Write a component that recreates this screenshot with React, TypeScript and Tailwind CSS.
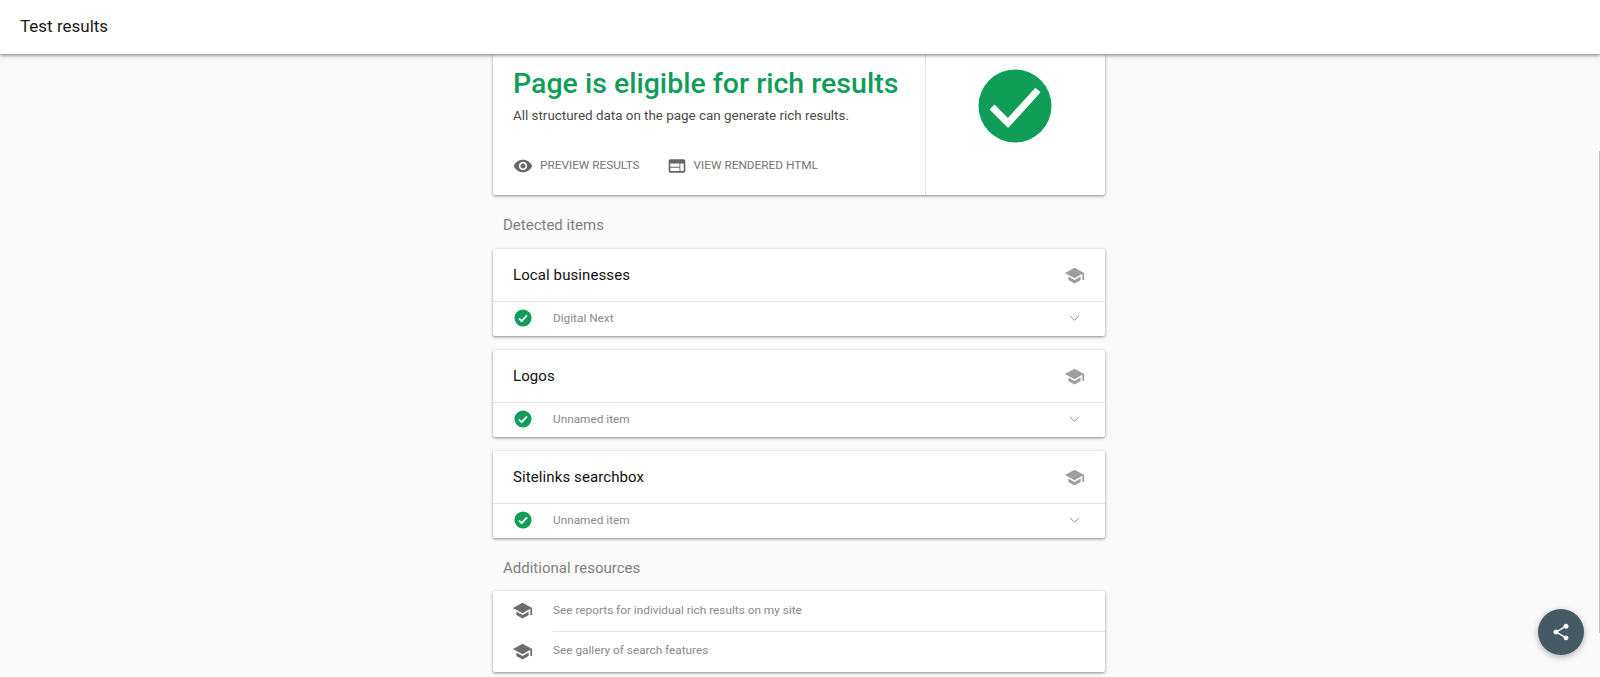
const SCHOOL = "M5 13.18v4L12 21l7-3.82v-4L12 17l-7-3.82zM12 3L1 9l11 6 9-4.91V17h2V9L12 3z";
const SHADOW = "shadow-[0_1px_3px_rgba(0,0,0,0.45)]";

const detectedItems = [
  { title: "Local businesses", name: "Digital Next" },
  { title: "Logos", name: "Unnamed item" },
  { title: "Sitelinks searchbox", name: "Unnamed item" },
];

function Icon({ d, className }: { d: string; className: string }) {
  return (
    <svg viewBox="0 0 24 24" fill="currentColor" className={className}>
      <path d={d} />
    </svg>
  );
}

function CheckBadge() {
  return (
    <svg viewBox="0 0 20 20" className="w-[18px] h-[20px] shrink-0">
      <circle cx="10" cy="10" r="9.5" fill="#0f9d58" />
      <path d="M5.5 10.5l3 3 6-6.5" fill="none" stroke="#fff" strokeWidth="2" />
    </svg>
  );
}

function ItemCard({ title, name }: { title: string; name: string }) {
  return (
    <div className={`bg-white rounded-[2px] ${SHADOW}`}>
      <div className="h-[53px] pl-5 pr-[20px] flex items-center justify-between border-b border-[#e4e4e4]">
        <span className="text-[15px] text-[#111] tracking-[0.1px]">{title}</span>
        <Icon d={SCHOOL} className="w-[21px] h-[21px] text-[#9e9e9e]" />
      </div>
      <div className="h-[34px] pb-[2px] pl-[21px] pr-[25px] flex items-center">
        <CheckBadge />
        <span className="ml-[21px] flex-1 text-[11.8px] leading-[14px] text-[#8a8a8a]">{name}</span>
        <svg viewBox="0 0 14 8" className="w-[11px] h-[6px] text-[#8a8a8a]">
          <path d="M1 1l6 6 6-6" fill="none" stroke="currentColor" strokeWidth="1.3" />
        </svg>
      </div>
    </div>
  );
}

export default function App() {
  return (
    <div className="relative h-[677px] overflow-hidden bg-[#fafafa] font-['Roboto',sans-serif]">
      <header className="relative z-10 h-[54px] bg-white flex items-center px-5 shadow-[0_1px_4px_rgba(0,0,0,0.55)]">
        <h1 className="text-[17px] text-[#1a1a1a] font-normal">Test results</h1>
      </header>

      <main className="w-[612px] ml-[493px] flex flex-col">
        {/* Status card */}
        <section className={`h-[141px] bg-white rounded-[2px] flex ${SHADOW}`}>
          <div className="w-[433px] pl-5 border-r border-[#e4e4e4]">
            <h2 className="mt-[16px] text-[28.5px] leading-[28px] font-medium text-[#0f9d58] whitespace-nowrap">
              Page is eligible for rich results
            </h2>
            <p className="mt-[10px] text-[13.4px] leading-[16px] text-[#4a4a4a]">
              All structured data on the page can generate rich results.
            </p>
            <div className="mt-[32px] flex items-center text-[11.8px] text-[#757575]">
              <Icon
                d="M12 4.5C7 4.5 2.73 7.61 1 12c1.73 4.39 6 7.5 11 7.5s9.27-3.11 11-7.5c-1.73-4.39-6-7.5-11-7.5zM12 17c-2.76 0-5-2.24-5-5s2.24-5 5-5 5 2.24 5 5-2.24 5-5 5zm0-8c-1.66 0-3 1.34-3 3s1.34 3 3 3 3-1.34 3-3-1.34-3-3-3z"
                className="w-5 h-5 text-[#666]"
              />
              <span className="ml-[7px]">PREVIEW RESULTS</span>
              <Icon
                d="M20 4H4c-1.1 0-1.99.9-1.99 2L2 18c0 1.1.9 2 2 2h16c1.1 0 2-.9 2-2V6c0-1.1-.9-2-2-2zm-5 14H4v-4h11v4zm0-5H4V9h11v4zm5 5h-4V9h4v9z"
                className="ml-[27px] w-5 h-5 text-[#666]"
              />
              <span className="ml-[7px]">VIEW RENDERED HTML</span>
            </div>
          </div>
          <div className="flex-1 pt-[15px] pr-[2px] flex justify-center">
            <svg viewBox="0 0 74 74" className="w-[74px] h-[74px]">
              <circle cx="37" cy="37" r="36.5" fill="#0f9d58" />
              <path d="M14 38l16 16 30-33" fill="none" stroke="#fff" strokeWidth="7" />
            </svg>
          </div>
        </section>

        <h3 className="mt-[21px] mb-[15px] ml-[10px] text-[15px] leading-[18px] font-normal text-[#808080]">
          Detected items
        </h3>

        <div className="flex flex-col gap-[14px]">
          {detectedItems.map((item) => (
            <ItemCard key={item.title} title={item.title} name={item.name} />
          ))}
        </div>

        <h3 className="mt-[21px] mb-[14px] ml-[10px] text-[15px] leading-[18px] font-normal text-[#808080]">
          Additional resources
        </h3>

        {/* Resources */}
        <section className={`bg-white rounded-[2px] ${SHADOW}`}>
          <div className="h-[41px] pl-[19px] flex items-center">
            <Icon d={SCHOOL} className="w-[21px] h-[21px] mb-[2px] text-[#6e6e6e]" />
            <div className="ml-[20px] flex-1 h-full flex items-center border-b border-[#e4e4e4] text-[11.8px] text-[#8a8a8a]">
              See reports for individual rich results on my site
            </div>
          </div>
          <div className="h-[40px] pb-[2px] pl-[19px] flex items-center">
            <Icon d={SCHOOL} className="w-[21px] h-[21px] text-[#6e6e6e]" />
            <span className="ml-[20px] text-[11.8px] text-[#8a8a8a]">See gallery of search features</span>
          </div>
        </section>
      </main>

      {/* Scroll track edge */}
      <div className="absolute right-0 top-[151px] h-[482px] w-px bg-[#c4c4c4]" />

      {/* Share button */}
      <button className="absolute left-[1538px] top-[609px] w-[46px] h-[46px] rounded-full bg-[#455a64] flex items-center justify-center shadow-[0_2px_6px_rgba(0,0,0,0.3)]">
        <Icon
          d="M18 16.08c-.76 0-1.44.3-1.96.77L8.91 12.7c.05-.23.09-.46.09-.7s-.04-.47-.09-.7l7.05-4.11c.54.5 1.25.81 2.04.81 1.66 0 3-1.34 3-3s-1.34-3-3-3-3 1.34-3 3c0 .24.04.47.09.7L8.04 9.81C7.5 9.31 6.79 9 6 9c-1.66 0-3 1.34-3 3s1.34 3 3 3c.79 0 1.5-.31 2.04-.81l7.12 4.16c-.05.21-.08.43-.08.65 0 1.61 1.31 2.92 2.92 2.92 1.61 0 2.92-1.31 2.92-2.92s-1.31-2.92-2.92-2.92z"
          className="w-5 h-5 text-white"
        />
      </button>
    </div>
  );
}
